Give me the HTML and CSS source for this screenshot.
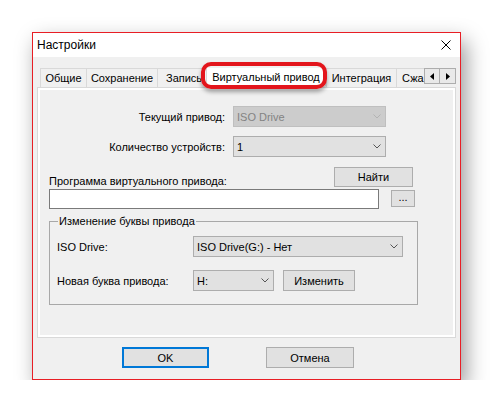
FILE: index.html
```html
<!DOCTYPE html>
<html lang="ru">
<head>
<meta charset="utf-8">
<title>Настройки</title>
<link rel="stylesheet" href="styles.css">
</head>
<body>
<div class="window">
  <div class="titlebar">
    <span class="title">Настройки</span>
    <svg class="close" width="10" height="10" viewBox="0 0 10 10"><path d="M0.5 0.5 L9.5 9.5 M9.5 0.5 L0.5 9.5" stroke="#000" stroke-width="1" fill="none"/></svg>
  </div>
  <div class="body">
    <div class="tabs">
      <div class="strip">
        <div class="tab w-general">Общие</div>
        <div class="tab w-save">Сохранение</div>
        <div class="tab w-write">Запись</div>
        <div class="tab tab-active w-virtual">Виртуальный привод</div>
        <div class="tab w-integ">Интеграция</div>
        <div class="tab w-compress">Сжа</div>
      </div>
      <div class="arrows">
        <span class="arr"><svg width="4" height="7" viewBox="0 0 4 7"><path d="M4 0 L0 3.5 L4 7 Z" fill="#000"/></svg></span>
        <span class="arr"><svg width="4" height="7" viewBox="0 0 4 7"><path d="M0 0 L4 3.5 L0 7 Z" fill="#000"/></svg></span>
      </div>
      <div class="highlight"></div>
    </div>
    <div class="panel">
      <div class="page">
        <div class="row row-first">
          <span class="label label-right">Текущий привод:</span>
          <div class="combo combo-disabled w-main"><span>ISO Drive</span><svg class="chev" width="8" height="5" viewBox="0 0 8 5"><path d="M0.5 0.5 L4 4 L7.5 0.5" stroke="#b3b3b3" fill="none"/></svg></div>
        </div>
        <div class="row row-second">
          <span class="label label-right">Количество устройств:</span>
          <div class="combo w-main"><span>1</span><svg class="chev" width="8" height="5" viewBox="0 0 8 5"><path d="M0.5 0.5 L4 4 L7.5 0.5" stroke="#555" fill="none"/></svg></div>
        </div>
        <div class="row row-prog">
          <span class="label label-prog">Программа виртуального привода:</span>
          <div class="btn btn-find">Найти</div>
        </div>
        <div class="row row-path">
          <div class="input"></div>
          <div class="btn btn-dots">...</div>
        </div>
        <div class="group">
          <div class="group-title">Изменение буквы привода</div>
          <div class="grow grow-first">
            <span class="glabel">ISO Drive:</span>
            <div class="combo w-iso"><span>ISO Drive(G:) - Нет</span><svg class="chev" width="8" height="5" viewBox="0 0 8 5"><path d="M0.5 0.5 L4 4 L7.5 0.5" stroke="#555" fill="none"/></svg></div>
          </div>
          <div class="grow grow-second">
            <span class="glabel">Новая буква привода:</span>
            <div class="combo w-letter"><span>H:</span><svg class="chev" width="8" height="5" viewBox="0 0 8 5"><path d="M0.5 0.5 L4 4 L7.5 0.5" stroke="#555" fill="none"/></svg></div>
            <div class="btn btn-change">Изменить</div>
          </div>
        </div>
      </div>
    </div>
    <div class="buttons">
      <div class="btn btn-ok">OK</div>
      <div class="btn btn-cancel">Отмена</div>
    </div>
  </div>
</div>
</body>
</html>
```

FILE: styles.css
```css
* { box-sizing: border-box; }
html, body { margin: 0; padding: 0; background: #fff; }
body {
  font-family: "Liberation Sans", Arial, sans-serif;
  font-size: 11px;
  color: #000;
  padding: 32px 0 0 32px;
}
.window {
  width: 429px;
  height: 348px;
  border: 1px solid #e81e25;
  background: #f0f0f0;
  display: flex;
  flex-direction: column;
  box-shadow: 5px 9px 20px rgba(0,0,0,0.4);
}
.titlebar {
  height: 24px;
  background: #fff;
  display: flex;
  align-items: center;
  justify-content: space-between;
  padding: 0 9px 0 4px;
}
.title { font-size: 12px; line-height: 14px; }
.close { display: block; }
.body {
  flex: 1;
  padding: 11px 4px 0 4px;
  display: flex;
  flex-direction: column;
}
.tabs {
  position: relative;
  height: 19px;
  display: flex;
  padding-left: 3px;
  z-index: 2;
}
.strip {
  width: 385px;
  height: 20px;
  display: flex;
  overflow: hidden;
  align-items: flex-start;
}
.tab {
  flex: none;
  height: 19px;
  line-height: 18px;
  text-align: center;
  border: 1px solid #d9d9d9;
  border-bottom: none;
  border-right: none;
  background: #f0f0f0;
  white-space: nowrap;
  overflow: hidden;
}
.w-general { width: 46px; }
.w-save { width: 71px; }
.w-write { width: 49px; text-align: left; padding-left: 8px; }
.w-virtual { width: 120px; }
.w-integ { width: 70px; }
.w-compress { width: 60px; text-align: left; padding-left: 5px; }
.tab-active {
  background: #fff;
  border-right: 1px solid #d9d9d9;
  height: 20px;
  margin-top: -2px;
  line-height: 20px;
}
.arrows {
  display: flex;
  height: 16px;
}
.arr {
  width: 16px;
  height: 16px;
  border: 1px solid #adadad;
  background: #e9e9e9;
  display: flex;
  align-items: center;
  justify-content: center;
}
.arr + .arr { border-left: none; }
.highlight {
  position: absolute;
  left: 164px;
  top: -6px;
  width: 126px;
  height: 27px;
  border: 4px solid #e3151c;
  border-radius: 10px;
  box-shadow: 0 3px 4px rgba(0,0,0,0.35);
  pointer-events: none;
}
.panel {
  width: 419px;
  height: 251px;
  border: 1px solid #d9d9d9;
  background: #fff;
  padding: 2px;
}
.page {
  height: 100%;
  background: #f0f0f0;
  display: flex;
  flex-direction: column;
}
.row { display: flex; align-items: center; }
.row-first { margin-top: 16px; }
.row-second { margin-top: 9px; }
.label-right { width: 185px; text-align: right; margin-right: 8px; }
.combo {
  height: 21px;
  border: 1px solid #adadad;
  background: #e1e1e1;
  display: flex;
  align-items: center;
  justify-content: space-between;
  padding: 0 4px 0 3px;
}
.combo-disabled { background: #cccccc; border-color: #bfbfbf; color: #838383; }
.chev { display: block; }
.w-main { width: 153px; }
.w-iso { width: 210px; }
.w-letter { width: 81px; }
.row-prog {
  margin-top: 10px;
  padding-left: 9px;
  align-items: flex-end;
  justify-content: space-between;
  padding-right: 40px;
}
.label-prog { line-height: 13px; margin-bottom: -1px; }
.btn {
  height: 21px;
  border: 1px solid #adadad;
  background: #e1e1e1;
  display: flex;
  align-items: center;
  justify-content: center;
}
.btn-find { width: 79px; height: 20px; }
.row-path { margin-top: 2px; padding-left: 9px; align-items: flex-start; }
.input { width: 330px; height: 20px; border: 1px solid #7a7a7a; background: #fff; }
.btn-dots { width: 24px; height: 17px; margin-left: 12px; margin-top: 1px; padding-bottom: 3px; }
.group {
  margin: 12px 0 0 9px;
  width: 369px;
  height: 84px;
  border: 1px solid #a8a8a8;
  padding-left: 7px;
  display: flex;
  flex-direction: column;
}
.group-title {
  align-self: flex-start;
  margin: -7px 0 0 1px;
  line-height: 13px;
  background: #f0f0f0;
  padding: 0 1px;
}
.grow { display: flex; align-items: center; }
.grow-first { margin-top: 8px; }
.grow-second { margin-top: 13px; }
.glabel { width: 136px; }
.btn-change { width: 72px; margin-left: 9px; }
.buttons {
  display: flex;
  margin-top: 9px;
  padding-left: 85px;
}
.btn-ok { width: 87px; border: 2px solid #0078d7; }
.btn-cancel { width: 88px; margin-left: 57px; }
```
